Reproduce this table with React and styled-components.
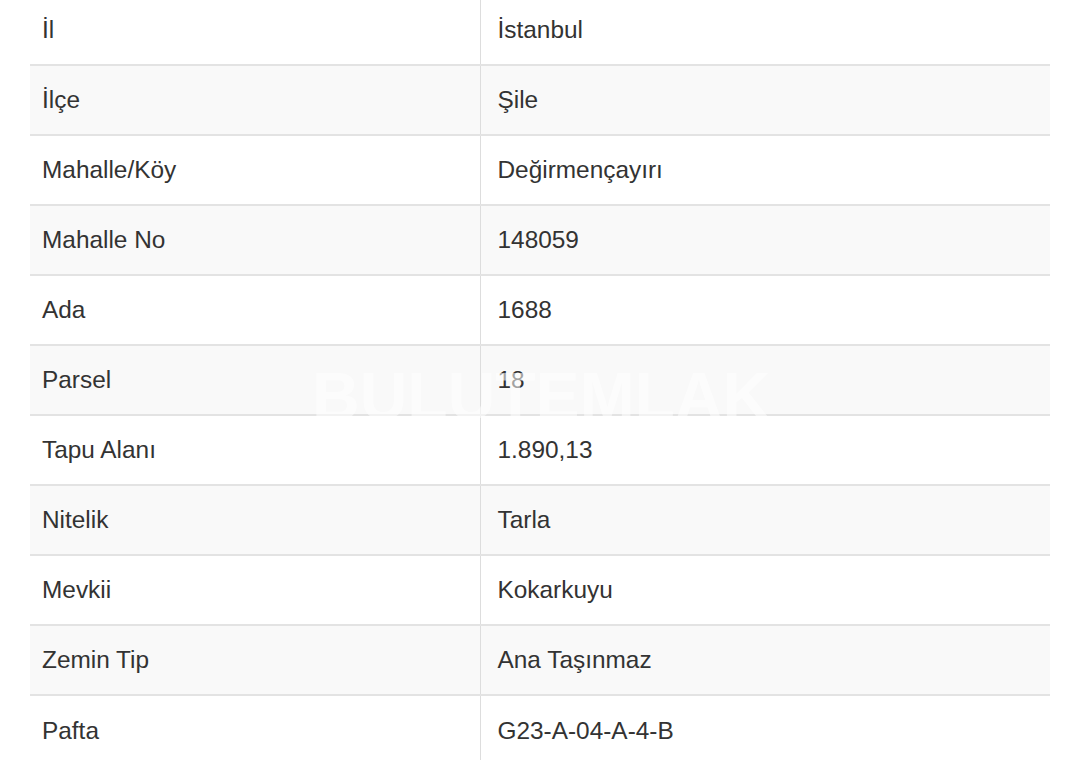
import styled, { createGlobalStyle } from "styled-components";

const rows = [
  ["İl", "İstanbul"],
  ["İlçe", "Şile"],
  ["Mahalle/Köy", "Değirmençayırı"],
  ["Mahalle No", "148059"],
  ["Ada", "1688"],
  ["Parsel", "18"],
  ["Tapu Alanı", "1.890,13"],
  ["Nitelik", "Tarla"],
  ["Mevkii", "Kokarkuyu"],
  ["Zemin Tip", "Ana Taşınmaz"],
  ["Pafta", "G23-A-04-A-4-B"],
];

const GlobalStyle = createGlobalStyle`
  html, body {
    margin: 0;
    padding: 0;
    background: #ffffff;
    overflow: hidden;
  }
  body {
    font-family: "Liberation Sans", Arial, sans-serif;
    color: #333333;
  }
`;

const Page = styled.div`
  width: 1080px;
  height: 760px;
  padding: 0 30px;
  box-sizing: border-box;
  overflow: hidden;
`;

const Wrap = styled.div`
  position: relative;
  margin-top: -6px;
`;

const Table = styled.table`
  width: 100%;
  border-collapse: collapse;
  border-spacing: 0;
  table-layout: fixed;
`;

const Row = styled.tr`
  background: ${(p) => (p.$striped ? "#f9f9f9" : "#ffffff")};
`;

const Cell = styled.td`
  box-sizing: border-box;
  height: 70px;
  padding: 0 12px;
  border-top: 2px solid #e3e3e3;
  font-size: 24.4px;
  line-height: 28px;
  color: #333333;
  vertical-align: middle;
  white-space: nowrap;

  &:first-child {
    width: 450px;
    padding-left: 12px;
  }

  &:last-child {
    border-left: 1px solid #dddddd;
    padding-left: 17px;
  }
`;

const Watermark = styled.div`
  position: absolute;
  left: 282px;
  top: 369px;
  font-family: "Liberation Sans", Arial, sans-serif;
  font-weight: 700;
  font-size: 66px;
  line-height: 1;
  color: rgba(255, 255, 255, 0.55);
  pointer-events: none;
`;

export default function App() {
  return (
    <>
      <GlobalStyle />
      <Page>
        <Wrap>
          <Table>
            <tbody>
              {rows.map(([label, value], i) => (
                <Row key={label} $striped={i % 2 === 1}>
                  <Cell>{label}</Cell>
                  <Cell>{value}</Cell>
                </Row>
              ))}
            </tbody>
          </Table>
          <Watermark aria-hidden="true">BULUTEMLAK</Watermark>
        </Wrap>
      </Page>
    </>
  );
}
